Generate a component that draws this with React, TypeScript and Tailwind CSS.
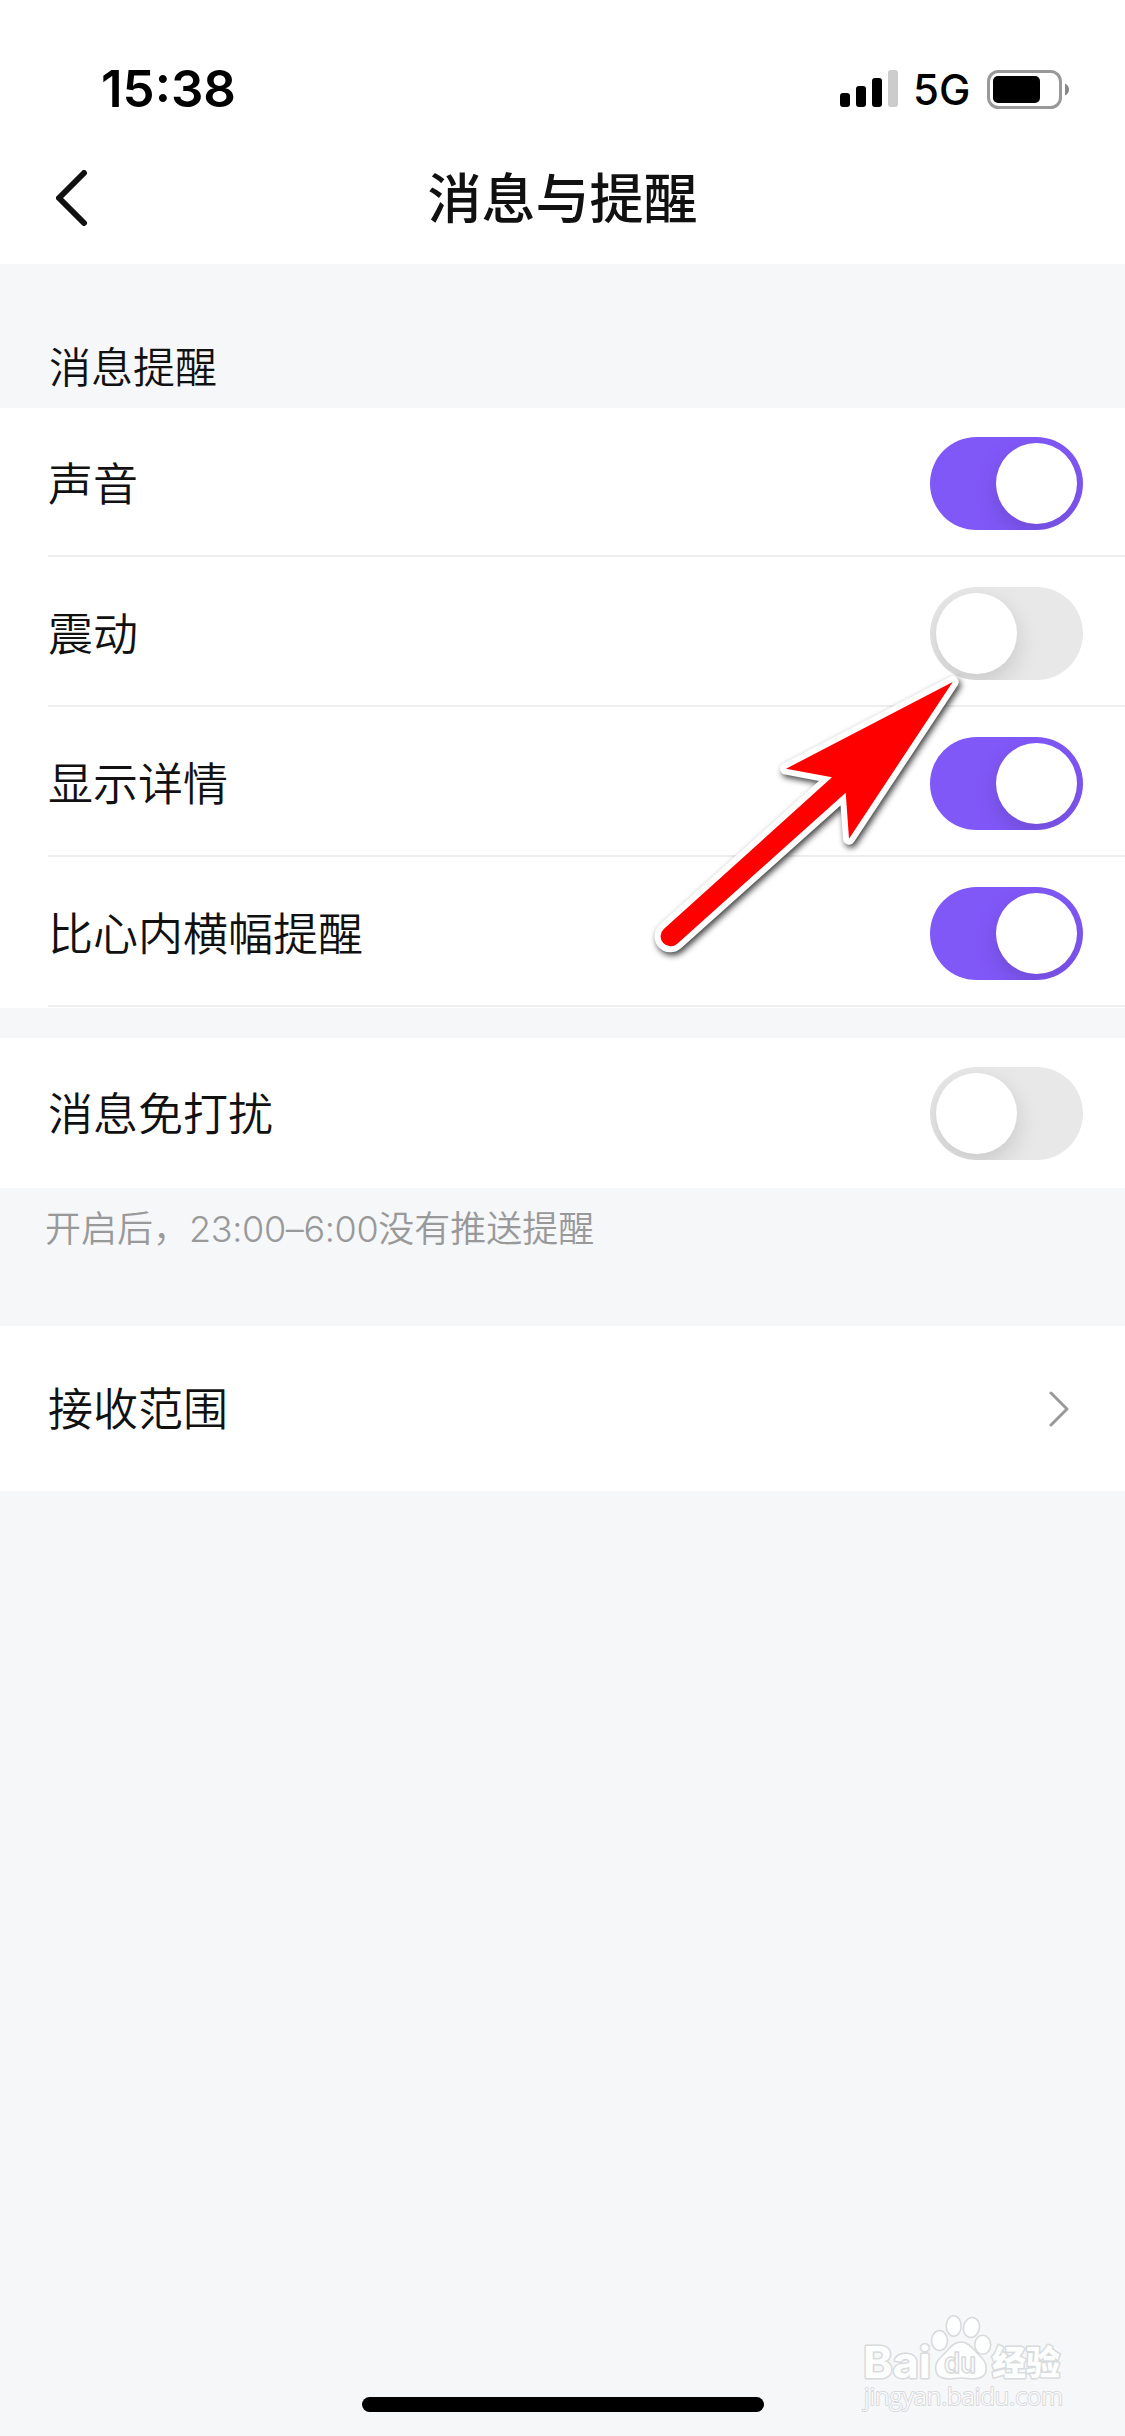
import { useState } from "react";
import { clsx } from "clsx";

interface Setting {
  id: string;
  label: string;
  on: boolean;
}

const reminders: Setting[] = [
  { id: "sound", label: "声音", on: true },
  { id: "vibrate", label: "震动", on: false },
  { id: "detail", label: "显示详情", on: true },
  { id: "banner", label: "比心内横幅提醒", on: true },
];

function Toggle({ initial, label }: { initial: boolean; label: string }) {
  const [on, setOn] = useState(initial);

  return (
    <button
      role="switch"
      aria-checked={on}
      aria-label={label}
      onClick={() => setOn(!on)}
      className={clsx(
        "flex h-[93px] w-[153px] shrink-0 items-center overflow-hidden rounded-full p-1.5",
        on ? "justify-end bg-[#8158f8]" : "justify-start bg-[#e8e8e8]",
      )}
    >
      <span className="size-[81px] rounded-full bg-white shadow-[0_9px_24px_rgba(0,0,0,0.14)]" />
    </button>
  );
}

function StatusBar() {
  return (
    <div className="flex h-[132px] items-start justify-between pt-[59px] pr-14 pl-[101px]">
      <span className="font-['Inter'] text-[51px] leading-[60px] font-semibold text-black">15:38</span>
      <div className="flex h-[60px] items-center">
        <svg className="h-[38px] w-[58px]" viewBox="0 0 58 38">
          <rect x="0" y="23" width="10" height="14" rx="3" />
          <rect x="16" y="16" width="10" height="21" rx="3" />
          <rect x="32" y="8" width="10" height="29" rx="3" />
          <rect x="48" y="0" width="10" height="37" rx="3" fill="#ccc" />
        </svg>
        <span className="mt-0.5 ml-[15px] w-[74px] font-['Inter'] text-[42px] leading-[60px] font-[450] text-black">5G</span>
        <svg className="h-[39px] w-[82px]" viewBox="0 0 82 39">
          <rect x="1.5" y="1.5" width="72" height="36" rx="10" fill="none" stroke="#999" strokeWidth="3" />
          <rect x="6" y="6" width="47" height="27" rx="5" />
          <path d="M78 13.5Q82 15.500 82 19.500T78 25.500Z" fill="#888" />
        </svg>
      </div>
    </div>
  );
}

function Arrow() {
  const shape =
    "M952.700 682L786 768.700L832 777.300L663.800 929A9.800 9.800 0 0 0 677.300 943.700L845.700 792.700L849 838.700Z";

  return (
    <svg
      className="pointer-events-none absolute top-0 left-0 h-[1000px] w-full drop-shadow-[2px_3px_3px_rgba(0,0,0,0.75)]"
      viewBox="0 0 1125 1000"
    >
      <path d={shape} fill="#fff" stroke="#fff" strokeWidth="12" strokeLinejoin="round" />
      <path d={shape} fill="#f00" />
    </svg>
  );
}

function Watermark() {
  return (
    <svg className="absolute right-0 bottom-0 h-[146px] w-[285px]" viewBox="0 0 285 146">
      <g fill="#fdfefe" stroke="#d9dadc" strokeWidth="1.6">
        <g strokeWidth="3" paintOrder="stroke" strokeLinejoin="round">
          <text x="23" y="88" fontFamily="Inter" fontWeight="700" fontSize="44" textLength="68" lengthAdjust="spacingAndGlyphs">
            Bai
          </text>
          <text x="152" y="85" fontFamily="Noto Sans CJK SC" fontWeight="900" fontSize="34" textLength="68" lengthAdjust="spacingAndGlyphs">
            经验
          </text>
          <text x="24" y="115" fontFamily="Open Sans" fontSize="24" strokeWidth="2" textLength="199" lengthAdjust="spacingAndGlyphs">
            jingyan.baidu.com
          </text>
        </g>
        <ellipse cx="99.500" cy="50.500" rx="8" ry="10" />
        <ellipse cx="113.700" cy="36" rx="7.500" ry="10.200" />
        <ellipse cx="131.500" cy="37.500" rx="8" ry="10" transform="rotate(12 131.500 37.500)" />
        <ellipse cx="142.700" cy="54.700" rx="8" ry="9.500" />
        <path d="M121 52C130 52 134 61 140 66C148 73 148 83 142 87C135 91 128 88 121 88C114 88 107 91 100 87C94 83 94 73 101 67C108 61 112 52 121 52Z" />
        <text x="104" y="83" fontFamily="Inter" fontWeight="600" fontSize="28" textLength="32" lengthAdjust="spacingAndGlyphs">
          du
        </text>
      </g>
    </svg>
  );
}

export default function App() {
  return (
    <div className="relative flex h-[2436px] w-[1125px] flex-col overflow-hidden bg-[#f5f7f9] font-['Noto_Sans_CJK_SC',sans-serif] text-[45px] font-[350] text-[#111]">
      <header className="h-[264px] bg-white">
        <StatusBar />
        <div className="grid h-[132px] grid-cols-[1fr_auto_1fr] items-center pl-14">
          <svg className="h-14 w-8" viewBox="0 0 32 56" fill="none" stroke="#111" strokeWidth="6" strokeLinecap="round" strokeLinejoin="round">
            <path d="M28 3L3 28L28 53" />
          </svg>
          <h1 className="-ml-14 pb-1 text-[54px] leading-[80px] font-medium">消息与提醒</h1>
        </div>
      </header>

      <h2 className="flex h-36 items-end pb-3 pl-[49px] text-[42px] leading-[62px]">消息提醒</h2>

      <section className="bg-white">
        {reminders.map((item) => (
          <div key={item.id} className="h-[150px] pb-px pl-12">
            <div className="flex h-[149px] items-center justify-between border-b-2 border-[#eee] pt-[3px] pr-[42px]">
              <span className="pb-[3px] leading-[66px]">{item.label}</span>
              <Toggle initial={item.on} label={item.label} />
            </div>
          </div>
        ))}
      </section>

      <section className="mt-[30px] flex h-[150px] items-center justify-between bg-white pr-[42px] pl-12">
        <span className="pb-[3px] leading-[66px]">消息免打扰</span>
        <Toggle initial={false} label="消息免打扰" />
      </section>
      <p className="h-[138px] pt-3 pl-[45px] text-[36px] leading-[52px] text-[#999]">
        开启后，<span className="font-['Inter'] font-[350] tracking-[-0.35px]">23:00–6:00</span>没有推送提醒
      </p>

      <section className="flex h-[165px] items-center justify-between bg-white pr-14 pl-12">
        <span className="pb-[3px] leading-[66px]">接收范围</span>
        <svg className="h-9 w-5" viewBox="0 0 20 36" fill="none" stroke="#999" strokeWidth="3" strokeLinecap="round" strokeLinejoin="round">
          <path d="M2 2L18 18L2 34" />
        </svg>
      </section>

      <div className="mt-auto mb-6 ml-[362px] h-[15px] w-[402px] rounded-full bg-black" />

      <Arrow />
      <Watermark />
    </div>
  );
}
